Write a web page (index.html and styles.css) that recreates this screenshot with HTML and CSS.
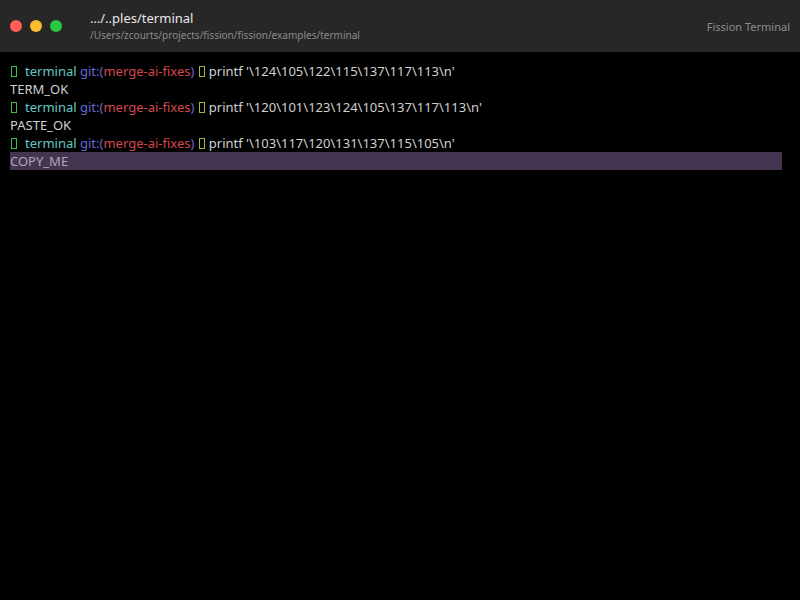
FILE: index.html
```html
<!DOCTYPE html>
<html>
<head>
  <meta charset="UTF-8" />
  <title>Fission Terminal</title>
  <link rel="stylesheet" href="styles.css">
</head>
<body>

<div class="window">
  <!-- Title bar -->
  <div class="titlebar">
    <div class="lights">
      <span class="light red"></span>
      <span class="light yellow"></span>
      <span class="light green"></span>
    </div>
    <div class="titles">
      <div class="title-main">…/..ples/terminal</div>
      <div class="title-path">/Users/zcourts/projects/fission/fission/examples/terminal</div>
    </div>
    <div class="app-name">Fission Terminal</div>
  </div>

  <!-- Terminal output -->
  <div class="term">
    <div class="line"><span class="box arrow"></span><span class="dir">terminal</span> <span class="git">git:(</span><span class="branch">merge-ai-fixes</span><span class="git">)</span> <span class="box mark"></span>printf '\124\105\122\115\137\117\113\n'</div>
    <div class="line">TERM_OK</div>
    <div class="line"><span class="box arrow"></span><span class="dir">terminal</span> <span class="git">git:(</span><span class="branch">merge-ai-fixes</span><span class="git">)</span> <span class="box mark"></span>printf '\120\101\123\124\105\137\117\113\n'</div>
    <div class="line">PASTE_OK</div>
    <div class="line"><span class="box arrow"></span><span class="dir">terminal</span> <span class="git">git:(</span><span class="branch">merge-ai-fixes</span><span class="git">)</span> <span class="box mark"></span>printf '\103\117\120\131\137\115\105\n'</div>
    <div class="line selected">COPY_ME</div>
  </div>
</div>

</body>
</html>
```

FILE: styles.css
```css
html, body {
  margin: 0;
  height: 100%;
  background: #000;
}

.window {
  height: 100%;
  display: flex;
  flex-direction: column;
  font-family: "Noto Sans", "Open Sans", sans-serif;
}

/* Title bar */
.titlebar {
  height: 52px;
  background: #272727;
  display: flex;
  align-items: center;
  padding: 0 10px;
  box-sizing: border-box;
}

.lights {
  display: flex;
  gap: 8px;
  width: 80px;
}

.light {
  width: 12px;
  height: 12px;
  border-radius: 50%;
}
.light.red    { background: #ff5f57; }
.light.yellow { background: #febc2e; }
.light.green  { background: #28c840; }

.titles {
  flex: 1;
  display: flex;
  flex-direction: column;
  gap: 1px;
  margin-top: -2px;
}

.title-main {
  color: #e6e6e6;
  font-size: 13px;
  line-height: 18px;
}

.title-path {
  color: #8a8a8a;
  font-size: 10px;
  line-height: 14px;
}

.app-name {
  color: #8c8c8c;
  font-size: 11px;
}

/* Terminal */
.term {
  flex: 1;
  padding: 10px 18px 0 10px;
  color: #d0d0d0;
  font-size: 13px;
}

.line {
  height: 18px;
  line-height: 18px;
  white-space: pre;
}

.line.selected {
  background: #433550;
  color: #aea6b6;
}

/* Missing-glyph boxes from the prompt */
.box {
  display: inline-block;
  width: 4px;
  height: 9px;
  border: 1px solid;
  vertical-align: -1px;
  margin: 0 2px 0 1px;
}
.box.arrow {
  border-color: #3fbf3f;
  margin-right: 8px;
}
.box.mark {
  border-color: #b0b03a;
  margin-right: 4px;
}

.dir    { color: #66c8c6; }
.git    { color: #6468d8; }
.branch { color: #d4484d; }
```
